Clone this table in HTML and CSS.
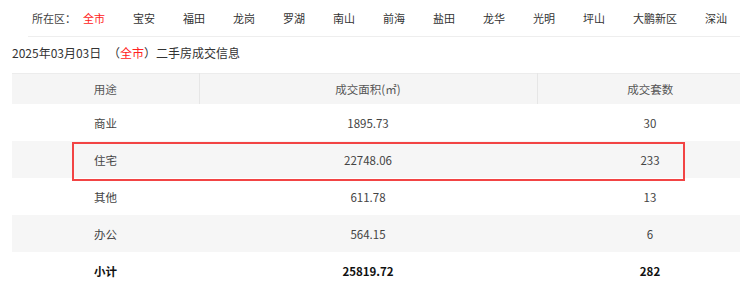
FILE: index.html
```html
<!DOCTYPE html>
<html lang="zh-CN">
<head>
<meta charset="utf-8">
<link rel="stylesheet" href="styles.css">
</head>
<body>
<div class="page">
  <div class="area-nav">
    <span class="area-label">所在区：</span>
    <a class="area-item active">全市</a>
    <a class="area-item">宝安</a>
    <a class="area-item">福田</a>
    <a class="area-item">龙岗</a>
    <a class="area-item">罗湖</a>
    <a class="area-item">南山</a>
    <a class="area-item">前海</a>
    <a class="area-item">盐田</a>
    <a class="area-item">龙华</a>
    <a class="area-item">光明</a>
    <a class="area-item">坪山</a>
    <a class="area-item">大鹏新区</a>
    <a class="area-item">深汕</a>
  </div>
  <div class="title">2025年03月03日 <span class="paren">（<span class="red">全市</span>）</span>二手房成交信息</div>
  <div class="table-wrap">
    <table class="data">
      <colgroup><col class="c1"><col class="c2"><col class="c3"></colgroup>
      <thead>
        <tr><th>用途</th><th>成交面积(㎡)</th><th>成交套数</th></tr>
      </thead>
      <tbody>
        <tr><td>商业</td><td>1895.73</td><td>30</td></tr>
        <tr><td>住宅</td><td>22748.06</td><td>233</td></tr>
        <tr><td>其他</td><td>611.78</td><td>13</td></tr>
        <tr><td>办公</td><td>564.15</td><td>6</td></tr>
        <tr class="total"><td>小计</td><td>25819.72</td><td>282</td></tr>
      </tbody>
    </table>
    <div class="highlight"></div>
  </div>
</div>
</body>
</html>
```
FILE: styles.css
```css
html, body {
  margin: 0;
  padding: 0;
  background: #fff;
  overflow: hidden;
}
body {
  font-family: "Noto Sans CJK SC", "Open Sans", sans-serif;
  color: #333;
  font-size: 12px;
}
.page {
  width: 740px;
  height: 289px;
  overflow: hidden;
}
.area-nav {
  margin-left: 28px;
  padding-left: 4px;
  height: 36px;
  border-bottom: 1px solid #eee;
  display: flex;
  align-items: center;
  font-size: 11px;
  line-height: 34px;
  white-space: nowrap;
  color: #333;
}
.area-label {
  margin-right: 7px;
  color: #444;
}
.area-item {
  margin-right: 28px;
  color: #333;
  text-decoration: none;
}
.area-item.active {
  color: #f22;
}
.title {
  margin-left: 12px;
  padding-top: 6px;
  line-height: 20px;
  font-size: 12px;
  color: #333;
}
.paren {
  margin-left: 4px;
}
.red {
  color: #f22;
}
.table-wrap {
  position: relative;
  margin-top: 10px;
  margin-left: 12px;
  width: 751px;
}
.data {
  width: 751px;
  border-collapse: collapse;
  table-layout: fixed;
  font-size: 11.5px;
}
.c1 { width: 187px; }
.c2 { width: 338px; }
.c3 { width: 226px; }
.data thead tr {
  background: #f5f5f5;
  border-top: 1px solid #ececec;
}
.data th {
  height: 30px;
  padding: 0;
  font-weight: normal;
  color: #555;
  text-align: center;
  border-left: 1px solid #e6e6e6;
}
.data th:first-child {
  border-left: none;
}
.data td {
  height: 37px;
  padding: 0;
  text-align: center;
  color: #444;
}
.data tbody tr:nth-child(even) {
  background: #f6f6f6;
}
.data tr.total td {
  font-weight: bold;
  color: #111;
}
.highlight {
  position: absolute;
  left: 60px;
  top: 69px;
  width: 609px;
  height: 35px;
  border: 2px solid #f24444;
}
```
